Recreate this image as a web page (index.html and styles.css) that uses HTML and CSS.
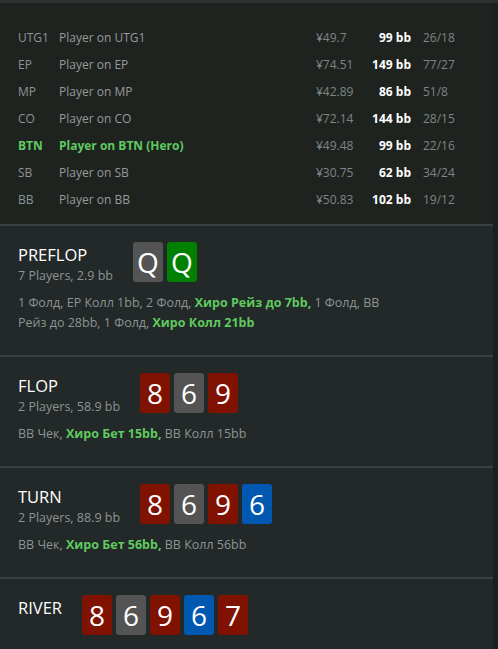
FILE: index.html
```html
<!DOCTYPE html>
<html>
<head>
<meta charset="utf-8">
<link rel="stylesheet" href="styles.css">
</head>
<body>
<div class="app">
  <div class="content">
    <div class="players">
      <div class="row"><span class="pos">UTG1</span><span class="name">Player on UTG1</span><span class="amt">¥49.7</span><span class="bb">99 bb</span><span class="ratio">26/18</span></div>
      <div class="row"><span class="pos">EP</span><span class="name">Player on EP</span><span class="amt">¥74.51</span><span class="bb">149 bb</span><span class="ratio">77/27</span></div>
      <div class="row"><span class="pos">MP</span><span class="name">Player on MP</span><span class="amt">¥42.89</span><span class="bb">86 bb</span><span class="ratio">51/8</span></div>
      <div class="row"><span class="pos">CO</span><span class="name">Player on CO</span><span class="amt">¥72.14</span><span class="bb">144 bb</span><span class="ratio">28/15</span></div>
      <div class="row hero"><span class="pos">BTN</span><span class="name">Player on BTN (Hero)</span><span class="amt">¥49.48</span><span class="bb">99 bb</span><span class="ratio">22/16</span></div>
      <div class="row"><span class="pos">SB</span><span class="name">Player on SB</span><span class="amt">¥30.75</span><span class="bb">62 bb</span><span class="ratio">34/24</span></div>
      <div class="row"><span class="pos">BB</span><span class="name">Player on BB</span><span class="amt">¥50.83</span><span class="bb">102 bb</span><span class="ratio">19/12</span></div>
    </div>

    <div class="street">
      <div class="head">
        <div class="title"><div class="t">PREFLOP</div><div class="sub">7 Players, 2.9 bb</div></div>
        <div class="cards"><span class="card gray">Q</span><span class="card green">Q</span></div>
      </div>
      <p class="actions">1 Фолд, EP Колл 1bb, 2 Фолд, <b>Хиро Рейз до 7bb,</b> 1 Фолд, BB<br>Рейз до 28bb, 1 Фолд, <b>Хиро Колл 21bb</b></p>
    </div>

    <div class="street">
      <div class="head">
        <div class="title"><div class="t">FLOP</div><div class="sub">2 Players, 58.9 bb</div></div>
        <div class="cards"><span class="card red">8</span><span class="card gray">6</span><span class="card red">9</span></div>
      </div>
      <p class="actions">BB Чек, <b>Хиро Бет 15bb,</b> BB Колл 15bb</p>
    </div>

    <div class="street">
      <div class="head">
        <div class="title"><div class="t">TURN</div><div class="sub">2 Players, 88.9 bb</div></div>
        <div class="cards"><span class="card red">8</span><span class="card gray">6</span><span class="card red">9</span><span class="card blue">6</span></div>
      </div>
      <p class="actions">BB Чек, <b>Хиро Бет 56bb,</b> BB Колл 56bb</p>
    </div>

    <div class="street last">
      <div class="head">
        <div class="title"><div class="t">RIVER</div></div>
        <div class="cards"><span class="card red">8</span><span class="card gray">6</span><span class="card red">9</span><span class="card blue">6</span><span class="card red">7</span></div>
      </div>
    </div>
  </div>
  <div class="scroll"></div>
</div>
</body>
</html>
```

FILE: styles.css
```css
html, body {
  margin: 0;
  padding: 0;
  background: #232828;
  height: 100%;
  overflow: hidden;
}
body {
  font-family: "Open Sans", "Noto Sans", sans-serif;
  font-size: 12px;
  color: #8c9494;
}
.app {
  display: flex;
  height: 649px;
  border-top: 3px solid #2b3030;
}
.content {
  flex: 1;
  display: flex;
  flex-direction: column;
}
.scroll {
  width: 5px;
  background: #1b1f1f;
}
.players {
  background: #1e2320;
  padding: 21px 0 11px 18px;
  border-bottom: 2px solid #3a3f3f;
}
.row {
  display: grid;
  grid-template-columns: 41px 257px 46px 49px 12px auto;
  height: 27px;
  align-items: center;
}
.row .ratio { grid-column: 6; }
.pos { color: #8c9494; }
.name { color: #969a9a; }
.amt { color: #7f8585; }
.bb { color: #ffffff; font-weight: 700; text-align: right; }
.ratio { color: #7f8585; }
.row.hero .pos, .row.hero .name { color: #5fca5f; font-weight: 700; }
.street {
  padding: 16px 0 22px 18px;
  border-bottom: 2px solid #3a3f3f;
}
.street.last { border-bottom: none; }
.head {
  display: flex;
  gap: 20px;
  align-items: flex-start;
}
.title .t {
  color: #ffffff;
  font-size: 16.5px;
  line-height: 24px;
  margin-top: 1px;
}
.title .sub {
  font-size: 12.5px;
  line-height: 18px;
}
.cards {
  display: flex;
  gap: 4px;
}
.card {
  width: 30px;
  height: 40px;
  border-radius: 3px;
  color: #ffffff;
  font-size: 28px;
  line-height: 40px;
  text-align: center;
}
.card.gray { background: #545454; }
.card.green { background: #008000; }
.card.red { background: #7f1200; }
.card.blue { background: #0058b0; }
.actions {
  margin: 8px 0 0 0;
  line-height: 20px;
  font-size: 12.5px;
}
.actions b { color: #5fca5f; font-weight: 700; line-height: 20px; }
```
